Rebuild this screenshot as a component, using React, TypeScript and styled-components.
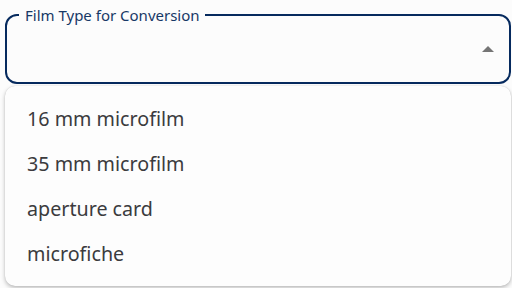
import React from 'react';
import styled, { createGlobalStyle } from 'styled-components';

const GlobalStyle = createGlobalStyle`
    html, body {
        margin: 0;
        padding: 0;
        background: #fcfcfc;
        font-family: 'Noto Sans', 'Open Sans', sans-serif;
    }
`;

const Page = styled.div`
    width: 512px;
    height: 288px;
    box-sizing: border-box;
    padding: 7px 1px 0 5px;
    overflow: hidden;
`;

const Field = styled.fieldset`
    margin: 0;
    padding: 0 15px 8px 15px;
    border: 2px solid #062a5e;
    border-radius: 12px;
    min-width: 0;
`;

const Legend = styled.legend`
    margin-left: -3px;
    padding: 0 5px 0 6px;
    font-size: 15px;
    line-height: 16px;
    color: #173866;
    white-space: nowrap;
`;

const SelectRow = styled.div`
    height: 51px;
    display: flex;
    align-items: center;
    justify-content: flex-end;
`;

const Caret = styled.span`
    width: 0;
    height: 0;
    border-left: 6px solid transparent;
    border-right: 6px solid transparent;
    border-bottom: 6px solid #757575;
`;

const Menu = styled.ul`
    list-style: none;
    margin: 2px 0 0;
    padding: 10px 0;
    background: #fdfdfd;
    border-radius: 10px;
    box-shadow: 0 2px 4px rgba(0, 0, 0, 0.25), 0 0 1px rgba(0, 0, 0, 0.2);
`;

const Option = styled.li`
    height: 45px;
    display: flex;
    align-items: center;
    padding: 0 22px;
    font-size: 19.7px;
    color: #3b3b3e;
`;

const options = ['16 mm microfilm', '35 mm microfilm', 'aperture card', 'microfiche'];

export default function App() {
    return (
        <Page>
            <GlobalStyle />
            <Field>
                <Legend>Film Type for Conversion</Legend>
                <SelectRow>
                    <Caret />
                </SelectRow>
            </Field>
            <Menu>
                {options.map((o) => (
                    <Option key={o}>{o}</Option>
                ))}
            </Menu>
        </Page>
    );
}
